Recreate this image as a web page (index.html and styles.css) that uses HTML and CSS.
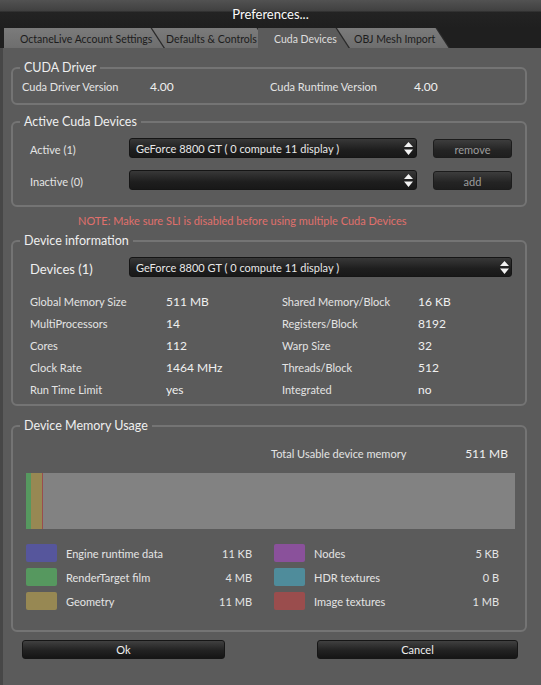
FILE: index.html
```html
<!DOCTYPE html>
<html>
<head>
<meta charset="utf-8">
<link rel="stylesheet" href="styles.css">
</head>
<body>
<div class="dialog">
  <div class="titlebar">Preferences...</div>
  <div class="tabs">
    <div class="tab tab-1"><div class="tab-face">OctaneLive Account Settings</div></div>
    <div class="tab tab-2"><div class="tab-face">Defaults &amp; Controls</div></div>
    <div class="tab tab-3 active"><div class="tab-face">Cuda Devices</div></div>
    <div class="tab tab-4"><div class="tab-face">OBJ Mesh Import</div></div>
  </div>
  <div class="content">
    <fieldset class="group g-driver">
      <legend>CUDA Driver</legend>
      <div class="driver">
        <span>Cuda Driver Version</span><span class="val">4.00</span>
        <span>Cuda Runtime Version</span><span class="val">4.00</span>
      </div>
    </fieldset>

    <fieldset class="group g-active">
      <legend>Active Cuda Devices</legend>
      <div class="dev-rows">
        <span class="lbl">Active (1)</span>
        <div class="combo"><span class="combo-text">GeForce 8800 GT ( 0 compute 11 display )</span><svg class="arrows" width="9" height="13" viewBox="0 0 9 13"><path d="M4.5 0 L9 5 H0 Z M0 7.5 H9 L4.5 13 Z" fill="#f2f2f2"/></svg></div>
        <div class="btn-small">remove</div>
        <span class="lbl">Inactive (0)</span>
        <div class="combo"><span class="combo-text"></span><svg class="arrows" width="9" height="13" viewBox="0 0 9 13"><path d="M4.5 0 L9 5 H0 Z M0 7.5 H9 L4.5 13 Z" fill="#f2f2f2"/></svg></div>
        <div class="btn-small">add</div>
      </div>
    </fieldset>

    <div class="note">NOTE: Make sure SLI is disabled before using multiple Cuda Devices</div>

    <fieldset class="group g-info">
      <legend>Device information</legend>
      <div class="devices-head">
        <span class="devices-label">Devices (1)</span>
        <div class="combo combo-wide"><span class="combo-text">GeForce 8800 GT ( 0 compute 11 display )</span><svg class="arrows" width="9" height="13" viewBox="0 0 9 13"><path d="M4.5 0 L9 5 H0 Z M0 7.5 H9 L4.5 13 Z" fill="#f2f2f2"/></svg></div>
      </div>
      <div class="info">
        <span>Global Memory Size</span><span class="val2">511 MB</span><span>Shared Memory/Block</span><span class="val2">16 KB</span>
        <span>MultiProcessors</span><span class="val2">14</span><span>Registers/Block</span><span class="val2">8192</span>
        <span>Cores</span><span class="val2">112</span><span>Warp Size</span><span class="val2">32</span>
        <span>Clock Rate</span><span class="val2">1464 MHz</span><span>Threads/Block</span><span class="val2">512</span>
        <span>Run Time Limit</span><span class="val2">yes</span><span>Integrated</span><span class="val2">no</span>
      </div>
    </fieldset>

    <fieldset class="group g-mem">
      <legend>Device Memory Usage</legend>
      <div class="total"><span>Total Usable device memory</span><span class="val">511 MB</span></div>
      <div class="bar">
        <div class="seg c-green" style="width:5px"></div>
        <div class="seg c-olive" style="width:11px"></div>
        <div class="seg c-red" style="width:1px"></div>
      </div>
      <div class="legend-grid">
        <div class="item"><span class="sw c-blue"></span><span>Engine runtime data</span><span class="v">11 KB</span></div>
        <div class="item"><span class="sw c-purple"></span><span>Nodes</span><span class="v">5 KB</span></div>
        <div class="item"><span class="sw c-green"></span><span>RenderTarget film</span><span class="v">4 MB</span></div>
        <div class="item"><span class="sw c-teal"></span><span>HDR textures</span><span class="v">0 B</span></div>
        <div class="item"><span class="sw c-olive"></span><span>Geometry</span><span class="v">11 MB</span></div>
        <div class="item"><span class="sw c-red"></span><span>Image textures</span><span class="v">1 MB</span></div>
      </div>
    </fieldset>

    <div class="actions">
      <div class="btn btn-ok">Ok</div>
      <div class="btn btn-cancel">Cancel</div>
    </div>
  </div>
</div>
</body>
</html>
```
FILE: styles.css
```css
* { box-sizing: border-box; }
html, body { margin: 0; padding: 0; }
body {
  background: #5b5b5b;
  font-family: Lato, "Liberation Sans", sans-serif;
  font-size: 11px;
  color: #e4e4e4;
}
.dialog {
  width: 541px;
  height: 685px;
  display: flex;
  flex-direction: column;
  background: #5b5b5b;
}
.titlebar {
  height: 28px;
  line-height: 28px;
  text-align: center;
  color: #fafafa;
  font-size: 13px;
  background: linear-gradient(#525252 0, #404040 11px, #232323 12px, #1f1f1f 100%);
}
.tabs {
  height: 20px;
  display: flex;
  padding-left: 4px;
  background: #1f1f1f;
}
.tab {
  position: relative;
  height: 20px;
  background: #2a2a2a;
  clip-path: polygon(0 0, calc(100% - 13px) 0, 100% 100%, 0 100%);
}
.tab + .tab { margin-left: -13px; }
.tab-face {
  height: 100%;
  margin-right: 1.5px;
  clip-path: polygon(0 0, calc(100% - 13px) 0, 100% 100%, 0 100%);
  background: linear-gradient(#7b7b7b, #6e6e6e);
  color: #1c1c1c;
  font-size: 10.5px;
  line-height: 23px;
  white-space: nowrap;
  overflow: hidden;
}
.tab-1 { width: 161px; z-index: 3; }
.tab-1 .tab-face { padding-left: 16px; }
.tab-2 { width: 119px; z-index: 2; }
.tab-2 .tab-face { padding-left: 14px; }
.tab-3 { width: 92px; z-index: 5; }
.tab-3 .tab-face { padding-left: 16px; background: #5b5b5b; color: #dedede; }
.tab-4 { width: 113px; z-index: 1; }
.tab-4 .tab-face { padding-left: 17px; }

.content {
  flex: 1;
  border-left: 3px solid #474747;
  padding: 12px 14px 0 8px;
}
.group {
  margin: 0;
  padding: 0;
  min-width: 0;
  border: 2px solid #747474;
  border-radius: 6px;
}
.group legend {
  margin-left: 7px;
  padding: 0 4px;
  font-size: 12.5px;
  line-height: 16px;
  color: #efefef;
}
.val { font-size: 12px; color: #f0f0f0; }
.val2 { font-size: 12px; color: #f0f0f0; }

.driver {
  display: grid;
  grid-template-columns: 128px 120px 144px 1fr;
  align-items: center;
  height: 27px;
  padding: 2px 0 7px 9px;
  line-height: 18px;
}

.g-active { margin-top: 9px; }
.dev-rows {
  display: grid;
  grid-template-columns: 83px 288px 79px;
  column-gap: 16px;
  row-gap: 12px;
  align-items: center;
  padding: 8px 0 15px 17px;
}
.lbl { padding-top: 2px; }
.combo {
  height: 20px;
  display: flex;
  align-items: center;
  border: 1px solid #151515;
  border-radius: 3px;
  background: linear-gradient(#383838, #1e1e1e 60%, #181818);
  padding: 0 3px 0 6px;
}
.combo-text { flex: 1; color: #e8e8e8; white-space: nowrap; }
.arrows { display: block; }
.btn-small {
  height: 19px;
  line-height: 19px;
  text-align: center;
  color: #9c9c9c;
  border: 1px solid #1c1c1c;
  border-radius: 3px;
  background: linear-gradient(#3d3d3d, #242424 60%, #1e1e1e);
}

.note {
  margin-top: 6px;
  padding-left: 67px;
  line-height: 16px;
  color: #e0706c;
}

.g-info { margin-top: 4px; }
.devices-head {
  display: flex;
  align-items: center;
  padding: 8px 12px 0 17px;
}
.devices-label { width: 99px; padding-top: 4px; font-size: 13px; color: #efefef; }
.combo-wide { width: 383px; padding-right: 2px; }
.info {
  display: grid;
  grid-template-columns: 136px 116px 136px 1fr;
  grid-auto-rows: 22px;
  align-items: center;
  padding: 13px 0 4px 17px;
}

.g-mem { margin-top: 12px; }
.total {
  display: flex;
  justify-content: space-between;
  align-items: center;
  height: 16px;
  margin-top: 11px;
  padding: 0 17px 0 258px;
}
.bar {
  margin: 12px 10px 0 13px;
  height: 56px;
  display: flex;
  background: #828282;
}
.seg { height: 100%; }
.legend-grid {
  display: grid;
  grid-template-columns: 226px 225px;
  column-gap: 22px;
  grid-auto-rows: 24px;
  padding: 12px 0 17px 13px;
}
.item { display: flex; align-items: center; }
.sw { width: 31px; height: 18px; border-radius: 2px; margin-right: 9px; }
.item .v { margin-left: auto; }
.c-blue { background: #56569c; }
.c-green { background: #56985f; }
.c-olive { background: #978853; }
.c-red { background: #9a4d4d; }
.c-purple { background: #8a519b; }
.c-teal { background: #4f8c9b; }

.actions {
  display: flex;
  margin-top: 8px;
  padding-left: 11px;
}
.btn {
  height: 19px;
  line-height: 18px;
  text-align: center;
  color: #f0f0f0;
  border: 1px solid #161616;
  border-radius: 3px;
  background: linear-gradient(#404040, #222 55%, #151515);
}
.btn-ok { width: 203px; }
.btn-cancel { width: 201px; margin-left: 92px; }
```
